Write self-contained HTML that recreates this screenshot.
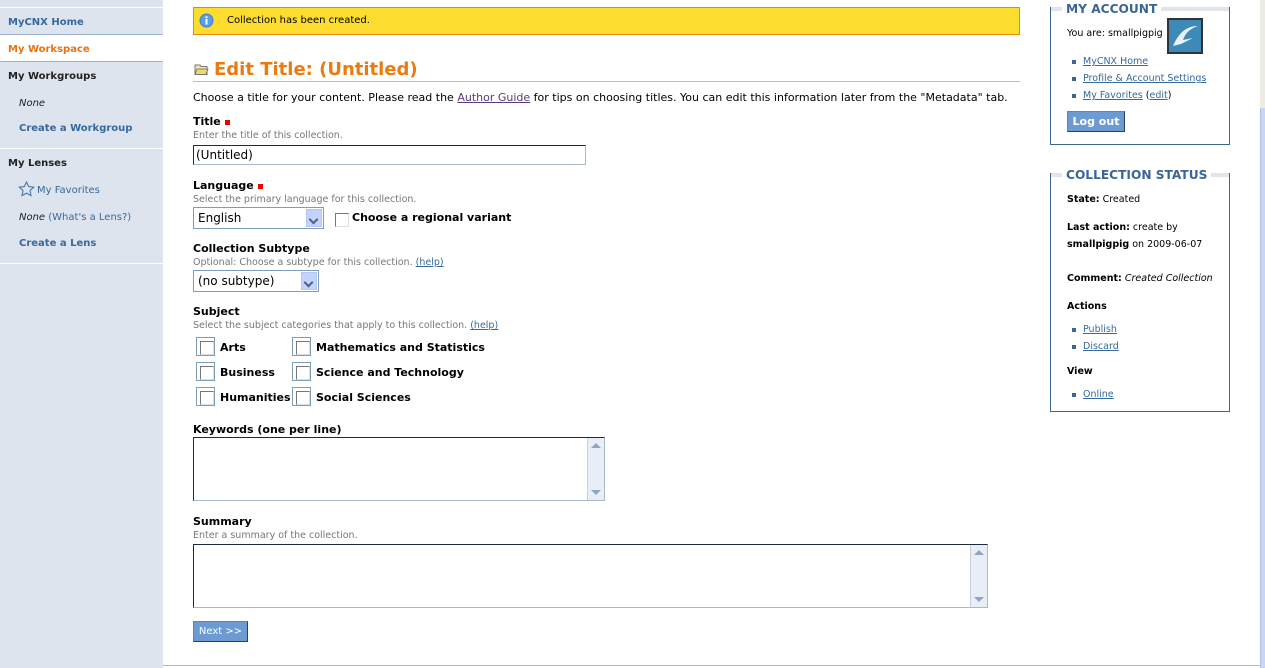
<!DOCTYPE html>
<html><head><meta charset="utf-8"><style>
*{margin:0;padding:0;box-sizing:border-box}
body{width:1265px;height:668px;position:relative;background:#fff;font-family:"DejaVu Sans","Liberation Sans",sans-serif;font-size:11px;color:#000;overflow:hidden}
.a{position:absolute;white-space:nowrap;margin-top:1px}
#side .a{margin-top:2px}
#side{position:absolute;left:0;top:0;width:163px;height:668px;background:#dde4ee}
.sb{font-weight:bold;font-size:10px;color:#36699c}
.hd{font-weight:bold;font-size:10px;color:#222}
.lbl{font-weight:bold;font-size:11px}
.help{font-size:9.5px;color:#777}
a,.lk{color:#36699c;text-decoration:underline}
.req{display:inline-block;width:5px;height:5px;background:#e00;margin-left:4px;vertical-align:middle}
.box{position:absolute;border:1px solid #aab8cc;border-top-color:#1c2a3a;border-left-color:#1c2a3a;background:#fff}
.sel{position:absolute;border:1px solid #7f9db9;background:#fff;font-size:12px;padding:3px 4px}
.sel i{position:absolute;right:1px;top:1px;bottom:1px;width:16px;background:#c3d3fd;border:1px solid #b4c6f0}
.sel i:after{content:"";position:absolute;left:3px;top:6px;width:5px;height:5px;border-right:2px solid #4d6185;border-bottom:2px solid #4d6185;transform:rotate(45deg)}
.cb{position:absolute;width:19px;height:19px;border:1px solid #7f9db9;background:#fff}
.cb:after{content:"";position:absolute;left:3px;top:3px;width:12px;height:12px;border:1px solid #777;border-right-color:#ddd;border-bottom-color:#ddd}
.panel{position:absolute;border:1px solid #3a6694;border-top:none;background:#fff}
.ptitle{position:absolute;font-weight:bold;font-size:12.2px;color:#3a6694;background:#fff;padding:0 4px}
ul{list-style:none}
li{position:absolute;font-size:9.5px;margin-top:1px}
li:before{content:"";position:absolute;left:-11px;top:4px;width:4px;height:4px;background:#3a6694}
.btn{position:absolute;background:#6b9bd2;color:#fff;font-weight:bold;font-size:10px;border:1px solid #5c86b8;border-right-color:#2a4060;border-bottom-color:#2a4060;text-align:center}
.sc{position:absolute;right:0;top:0;width:17px;height:62px;background:#e8eef5;border-left:1px solid #ccd}
.sc:before,.sc:after{content:"";position:absolute;left:3px;border-left:5px solid transparent;border-right:5px solid transparent}
.sc:before{top:5px;border-bottom:5px solid #8fa6c2}
.sc:after{bottom:5px;border-top:5px solid #8fa6c2}
</style></head><body>
<div id="side">
 <div style="position:absolute;top:7px;left:0;width:163px;height:1px;background:#fff"></div>
 <div class="a sb" style="left:8px;top:15px">MyCNX Home</div>
 <div style="position:absolute;top:34px;left:0;width:163px;height:28px;background:#fff;border-top:1px solid #9fb4cf;border-bottom:1px solid #9fb4cf"></div>
 <div class="a" style="left:8px;top:42px;font-weight:bold;font-size:10px;color:#e8720c">My Workspace</div>
 <div class="a hd" style="left:8px;top:69px">My Workgroups</div>
 <div class="a" style="left:19px;top:96px;font-size:10px;font-style:italic;color:#222">None</div>
 <div class="a sb" style="left:19px;top:121px">Create a Workgroup</div>
 <div style="position:absolute;top:148px;left:0;width:163px;height:1px;background:#fff"></div>
 <div class="a hd" style="left:8px;top:156px">My Lenses</div>
 <svg style="position:absolute;left:18px;top:181px" width="17" height="17" viewBox="0 0 17 17"><path d="M8.5 1l2.2 4.6 5 .6-3.7 3.4 1 5-4.5-2.5-4.5 2.5 1-5L1.3 6.2l5-.6z" fill="none" stroke="#4a78a8" stroke-width="1.1"/></svg>
 <div class="a" style="left:37px;top:183px;font-size:10px;color:#36699c">My Favorites</div>
 <div class="a" style="left:19px;top:210px;font-size:10px;color:#36699c"><i style="color:#222">None</i> (What's a Lens?)</div>
 <div class="a sb" style="left:19px;top:236px">Create a Lens</div>
 <div style="position:absolute;top:263px;left:0;width:163px;height:1px;background:#fff"></div>
</div>
<div style="position:absolute;left:163px;top:665px;width:1097px;height:1px;background:#aab8cc"></div>
<div style="position:absolute;left:1260px;top:0;width:5px;height:108px;background:#eeede5"></div>
<div style="position:absolute;left:1260px;top:108px;width:5px;height:560px;background:#c9d6f5;border-left:1px solid #b0c0e8"></div>

<div style="position:absolute;left:193px;top:7px;width:827px;height:28px;background:#fddc30;border:1px solid #e88a10"></div>
<svg style="position:absolute;left:199px;top:13px" width="15" height="15"><circle cx="7.5" cy="7.5" r="7" fill="#3d7ed6"/><circle cx="7.5" cy="7.5" r="6" fill="#5b9be8"/><rect x="6.5" y="6" width="2" height="5.5" fill="#fff"/><rect x="6.5" y="3.3" width="2" height="1.8" fill="#fff"/></svg>
<div class="a" style="left:227px;top:14px;font-size:10px">Collection has been created.</div>

<svg style="position:absolute;left:194px;top:63px" width="15" height="12"><path d="M1 2h5l1 1.5h6v8H1z" fill="#f2e6a0" stroke="#777" stroke-width="1"/><path d="M3 6h11l-2 5.5H1z" fill="#e8d878" stroke="#666" stroke-width=".8"/></svg>
<div class="a" style="left:214px;top:58px;font-size:18px;font-weight:bold;color:#ec7a0c">Edit Title: (Untitled)</div>
<div style="position:absolute;left:193px;top:81px;width:827px;height:1px;background:#f2c037"></div>
<div class="a" style="left:193px;top:90px;font-size:11px">Choose a title for your content. Please read the <span style="color:#5a3a7a;text-decoration:underline">Author Guide</span> for tips on choosing titles. You can edit this information later from the "Metadata" tab.</div>

<div class="a lbl" style="left:193px;top:114px">Title<span class="req"></span></div>
<div class="a help" style="left:193px;top:129px">Enter the title of this collection.</div>
<div class="box" style="left:193px;top:145px;width:393px;height:20px;font-size:12px;padding:2px 2px">(Untitled)</div>

<div class="a lbl" style="left:193px;top:178px">Language<span class="req"></span></div>
<div class="a help" style="left:193px;top:193px">Select the primary language for this collection.</div>
<div class="sel" style="left:193px;top:207px;width:131px;height:22px">English<i></i></div>
<div class="cb" style="left:332px;top:210px;width:14px;height:14px;border:none"></div>
<div class="a lbl" style="left:352px;top:210px">Choose a regional variant</div>

<div class="a lbl" style="left:193px;top:241px">Collection Subtype</div>
<div class="a help" style="left:193px;top:256px">Optional: Choose a subtype for this collection. <span class="lk">(help)</span></div>
<div class="sel" style="left:193px;top:270px;width:126px;height:22px">(no subtype)<i></i></div>

<div class="a lbl" style="left:193px;top:304px">Subject</div>
<div class="a help" style="left:193px;top:319px">Select the subject categories that apply to this collection. <span class="lk">(help)</span></div>
<div class="cb" style="left:196px;top:337px"></div><div class="a lbl" style="left:220px;top:340px">Arts</div>
<div class="cb" style="left:292px;top:337px"></div><div class="a lbl" style="left:316px;top:340px">Mathematics and Statistics</div>
<div class="cb" style="left:196px;top:362px"></div><div class="a lbl" style="left:220px;top:365px">Business</div>
<div class="cb" style="left:292px;top:362px"></div><div class="a lbl" style="left:316px;top:365px">Science and Technology</div>
<div class="cb" style="left:196px;top:387px"></div><div class="a lbl" style="left:220px;top:390px">Humanities</div>
<div class="cb" style="left:292px;top:387px"></div><div class="a lbl" style="left:316px;top:390px">Social Sciences</div>

<div class="a lbl" style="left:193px;top:422px">Keywords (one per line)</div>
<div class="box" style="left:193px;top:437px;width:412px;height:64px"><div class="sc"></div></div>
<div class="a lbl" style="left:193px;top:514px">Summary</div>
<div class="a help" style="left:193px;top:529px">Enter a summary of the collection.</div>
<div class="box" style="left:193px;top:544px;width:795px;height:64px"><div class="sc"></div></div>
<div class="btn" style="left:193px;top:621px;width:55px;height:21px;line-height:19px;font-weight:normal">Next &gt;&gt;</div>

<div class="panel" style="left:1050px;top:7px;width:180px;height:138px"></div>
<div style="position:absolute;left:1050px;top:7px;width:180px;height:4px;background:#dfe5ea;border-left:1px solid #3a6694;border-right:1px solid #3a6694"></div>
<div class="ptitle" style="left:1062px;top:2px">MY ACCOUNT</div>
<div class="a" style="left:1067px;top:27px;font-size:9.5px">You are: smallpigpig</div>
<div style="position:absolute;left:1167px;top:18px;width:36px;height:36px;background:#333;padding:2px"><div style="width:32px;height:32px;background:#3d8ab8;position:relative"><svg width="32" height="32"><path d="M4 26c6-14 14-20 25-20-9 3-13 8-15 14l10-2-12 6z" fill="#e8f0f8"/></svg></div></div>
<ul><li style="left:1083px;top:55px"><a>MyCNX Home</a></li>
<li style="left:1083px;top:72px"><a>Profile &amp; Account Settings</a></li>
<li style="left:1083px;top:89px"><a>My Favorites</a> (<a>edit</a>)</li></ul>
<div class="btn" style="left:1067px;top:111px;width:58px;height:21px;line-height:19px;font-size:11px">Log out</div>

<div class="panel" style="left:1050px;top:173px;width:180px;height:239px"></div>
<div style="position:absolute;left:1050px;top:173px;width:180px;height:4px;background:#dfe5ea;border-left:1px solid #3a6694;border-right:1px solid #3a6694"></div>
<div class="ptitle" style="left:1062px;top:168px">COLLECTION STATUS</div>
<div class="a" style="left:1067px;top:193px;font-size:9.5px"><b>State:</b> Created</div>
<div class="a" style="left:1067px;top:221px;font-size:9.5px"><b>Last action:</b> create by</div>
<div class="a" style="left:1067px;top:238px;font-size:9.5px"><b>smallpigpig</b> on 2009-06-07</div>
<div class="a" style="left:1067px;top:272px;font-size:9.5px"><b>Comment:</b> <i>Created Collection</i></div>
<div class="a" style="left:1067px;top:300px;font-size:9.5px;font-weight:bold">Actions</div>
<ul><li style="left:1083px;top:323px"><a>Publish</a></li><li style="left:1083px;top:340px"><a>Discard</a></li></ul>
<div class="a" style="left:1067px;top:365px;font-size:9.5px;font-weight:bold">View</div>
<ul><li style="left:1083px;top:388px"><a>Online</a></li></ul>
</body></html>
